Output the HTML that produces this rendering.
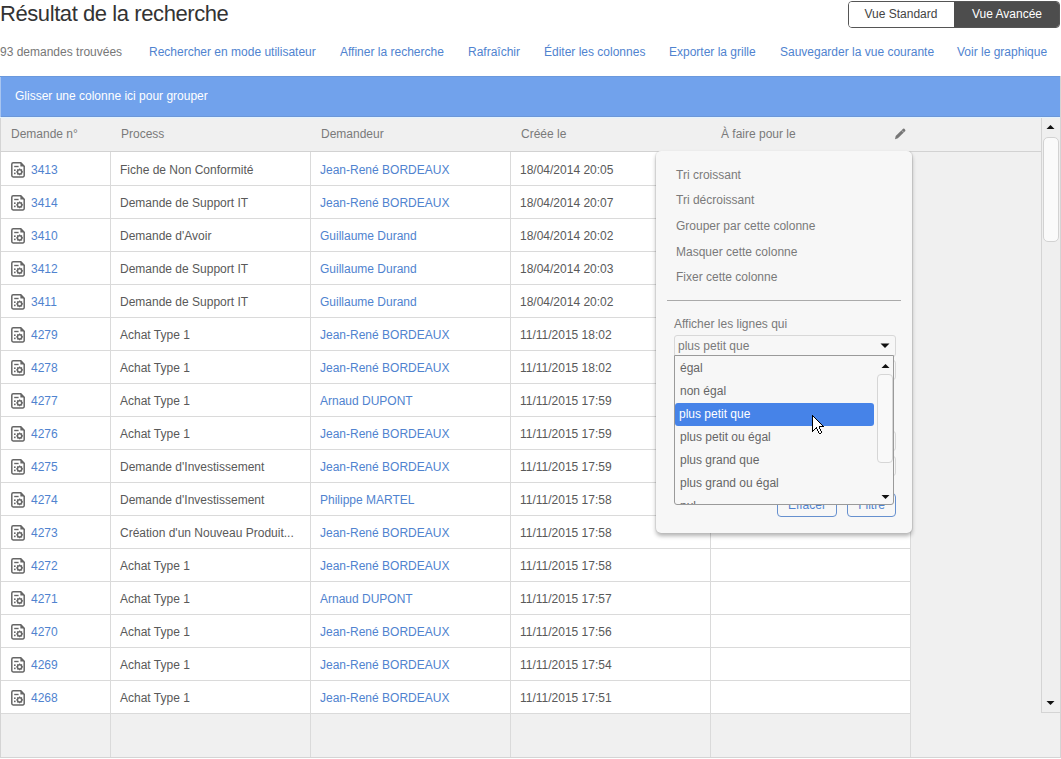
<!DOCTYPE html>
<html><head><meta charset="utf-8">
<style>
*{box-sizing:border-box;margin:0;padding:0}
html,body{width:1061px;height:759px;overflow:hidden;background:#fff;font-family:"Liberation Sans",sans-serif;font-size:12px;color:#555;position:relative}
.t{position:absolute;white-space:nowrap;line-height:14px;font-size:12px}
.tc{text-align:center}
.title{position:absolute;left:0;top:2px;font-size:22px;letter-spacing:-0.42px;line-height:24px;color:#333;white-space:nowrap}
.toggle{position:absolute;left:848px;top:1px;width:212px;height:27px;border:1px solid #555;border-radius:4px;overflow:hidden}
.toggle .t1{position:absolute;left:0;top:0;width:105px;height:100%;background:#fff}
.toggle .t2{position:absolute;left:105px;top:0;right:0;height:100%;background:#4d4d4d}
.lnk{color:#5083cf}
.cnt{color:#777}
.wt{color:#fff}
.ht{color:#7a7a7a}
.dt{color:#595959}
.box{position:absolute;left:0;top:76px;width:1061px;height:682px;background:#f0f0f0;border:1px solid #d4d4d4;border-top:none}
.band{position:absolute;left:0;top:76px;width:1060px;height:41px;background:#71a2ec;border-top:1px solid #6b99dd;border-bottom:1px solid #6b97d9}
.bandline{position:absolute;left:0;top:117px;width:1060px;height:1px;background:#e5f3fd}.hdrtint{position:absolute;left:1px;top:118px;width:1040px;height:1px;background:#ecf0f3}
.hdr{position:absolute;left:0;top:151px;width:1041px;height:1px;background:#d2d2d2}
.rows{position:absolute;left:1px;top:152px;width:909px;height:561px;background:#fff}
.hl{position:absolute;left:1px;width:909px;height:1px;background:#dadada}
.vl{position:absolute;top:152px;width:1px;height:605px;background:#dadada}
.ico{position:absolute}
.sb{position:absolute;left:1041px;top:118px;width:19px;height:595px;border-left:1px solid #d4d4d4;border-bottom:1px solid #d4d4d4;background:#efefef}
.sbthumb{position:absolute;left:1043px;top:137px;width:16px;height:105px;border:1px solid #d2d2d2;border-radius:5px;background:#fafafa}
.pop{position:absolute;left:656px;top:151px;width:256px;height:382px;background:#f7f7f7;border-radius:5px;box-shadow:0 3px 4px rgba(0,0,0,.3),-1px 0 0 rgba(0,0,0,.06),1px 0 0 rgba(0,0,0,.08)}
.mt{color:#7a7a7a}
.sep{position:absolute;left:667px;top:300px;width:234px;height:1px;background:#aaa}
.sel{position:absolute;left:674px;top:335px;width:222px;height:22px;border:1px solid #d8d8d8;border-radius:3px;background:#f7f7f7}
.inp{position:absolute;left:674px;width:222px;height:20px;border:1px solid #d8d8d8;border-radius:3px;background:#f7f7f7}
.btn{position:absolute;height:24px;border:1px solid #6690cf;border-radius:4px;background:#f7f7f7;color:#5083cf;text-align:center;line-height:23px}
.dd{position:absolute;left:674px;top:355px;width:220px;height:150px;border:1px solid #9a9a9a;border-radius:0 0 3px 3px;background:#f7f7f7;overflow:hidden}
.hi{position:absolute;left:675px;top:403px;width:199px;height:23px;border-radius:3px;background:#4683e8}
.ddthumb{position:absolute;left:877px;top:374px;width:16px;height:89px;border:1px solid #d6d6d6;border-radius:4px;background:#f9f9f9}
</style></head><body>
<div class="title">Résultat de la recherche</div>
<div class="toggle"><div class="t1"></div><div class="t2"></div></div>
<div class="t tc" style="left:848px;width:106px;top:7px;color:#444">Vue Standard</div>
<div class="t tc" style="left:954px;width:106px;top:7px;color:#fff">Vue Avancée</div>
<div class="t cnt" style="left:0px;top:45px;">93 demandes trouvées</div>
<div class="t lnk" style="left:149px;top:45px;">Rechercher en mode utilisateur</div>
<div class="t lnk" style="left:340px;top:45px;">Affiner la recherche</div>
<div class="t lnk" style="left:468px;top:45px;">Rafraîchir</div>
<div class="t lnk" style="left:544px;top:45px;">Éditer les colonnes</div>
<div class="t lnk" style="left:669px;top:45px;">Exporter la grille</div>
<div class="t lnk" style="left:780px;top:45px;">Sauvegarder la vue courante</div>
<div class="t lnk" style="left:957px;top:45px;">Voir le graphique</div>
<div class="box"></div>
<div class="band"></div>
<div class="bandline"></div>
<div style="position:absolute;left:0;top:77px;width:1px;height:40px;background:#a8c5f0"></div>
<div class="hdrtint"></div>
<div class="t wt" style="left:15px;top:89px;">Glisser une colonne ici pour grouper</div>
<div class="hdr"></div>
<div class="t ht" style="left:11px;top:127px;">Demande n°</div>
<div class="t ht" style="left:121px;top:127px;">Process</div>
<div class="t ht" style="left:321px;top:127px;">Demandeur</div>
<div class="t ht" style="left:521px;top:127px;">Créée le</div>
<div class="t ht" style="left:721px;top:127px;">À faire pour le</div>
<svg class="pencil" width="14" height="14" viewBox="0 0 14 14" style="position:absolute;left:893px;top:127px"><path d="M2 12.2 L4.9 11.3 L12.3 3.9 Q12.6 3.1 12 2.4 L11.4 1.8 Q10.8 1.3 10.1 1.7 L2.7 9.1 Z" fill="#777"/><path d="M8.7 3.4 L10.9 5.6" stroke="#e8e8e8" stroke-width="0.6"/></svg>
<div class="rows"></div>
<div class="hl" style="top:185px"></div>
<div class="hl" style="top:218px"></div>
<div class="hl" style="top:251px"></div>
<div class="hl" style="top:284px"></div>
<div class="hl" style="top:317px"></div>
<div class="hl" style="top:350px"></div>
<div class="hl" style="top:383px"></div>
<div class="hl" style="top:416px"></div>
<div class="hl" style="top:449px"></div>
<div class="hl" style="top:482px"></div>
<div class="hl" style="top:515px"></div>
<div class="hl" style="top:548px"></div>
<div class="hl" style="top:581px"></div>
<div class="hl" style="top:614px"></div>
<div class="hl" style="top:647px"></div>
<div class="hl" style="top:680px"></div>
<div class="hl" style="top:713px"></div>
<div class="vl" style="left:110px"></div>
<div class="vl" style="left:310px"></div>
<div class="vl" style="left:510px"></div>
<div class="vl" style="left:710px"></div>
<div class="vl" style="left:910px"></div>
<svg class="ico" width="16" height="17" viewBox="0 0 16 17" style="left:10px;top:161px"><path d="M3.2 1.8 H10.8 L14.2 5.2 V14.6 A1.4 1.4 0 0 1 12.8 16 H3.2 A1.4 1.4 0 0 1 1.8 14.6 V3.2 A1.4 1.4 0 0 1 3.2 1.8 Z" fill="none" stroke="#666" stroke-width="1.5"/>
<path d="M10.4 1.3 L14.7 5.6 L10.4 5.6 Z" fill="#666"/>
<path d="M4.2 5.5 H8.6" stroke="#666" stroke-width="1.4"/>
<rect x="4" y="8.4" width="1.6" height="1.6" fill="#666"/>
<rect x="4" y="11.6" width="1.6" height="1.6" fill="#666"/>
<circle cx="9.6" cy="10.9" r="2.1" fill="none" stroke="#666" stroke-width="1.4"/>
<path d="M9.6 7.5 V14.3 M6.2 10.9 H13 M7.2 8.5 L12 13.3 M12 8.5 L7.2 13.3" stroke="#666" stroke-width="1.2"/>
<circle cx="9.6" cy="10.9" r="1.4" fill="#fff"/>
</svg>
<div class="t lnk" style="left:31px;top:163px;">3413</div>
<div class="t dt" style="left:120px;top:163px;">Fiche de Non Conformité</div>
<div class="t lnk" style="left:320px;top:163px;">Jean-René BORDEAUX</div>
<div class="t dt" style="left:520px;top:163px;">18/04/2014 20:05</div>
<svg class="ico" width="16" height="17" viewBox="0 0 16 17" style="left:10px;top:194px"><path d="M3.2 1.8 H10.8 L14.2 5.2 V14.6 A1.4 1.4 0 0 1 12.8 16 H3.2 A1.4 1.4 0 0 1 1.8 14.6 V3.2 A1.4 1.4 0 0 1 3.2 1.8 Z" fill="none" stroke="#666" stroke-width="1.5"/>
<path d="M10.4 1.3 L14.7 5.6 L10.4 5.6 Z" fill="#666"/>
<path d="M4.2 5.5 H8.6" stroke="#666" stroke-width="1.4"/>
<rect x="4" y="8.4" width="1.6" height="1.6" fill="#666"/>
<rect x="4" y="11.6" width="1.6" height="1.6" fill="#666"/>
<circle cx="9.6" cy="10.9" r="2.1" fill="none" stroke="#666" stroke-width="1.4"/>
<path d="M9.6 7.5 V14.3 M6.2 10.9 H13 M7.2 8.5 L12 13.3 M12 8.5 L7.2 13.3" stroke="#666" stroke-width="1.2"/>
<circle cx="9.6" cy="10.9" r="1.4" fill="#fff"/>
</svg>
<div class="t lnk" style="left:31px;top:196px;">3414</div>
<div class="t dt" style="left:120px;top:196px;">Demande de Support IT</div>
<div class="t lnk" style="left:320px;top:196px;">Jean-René BORDEAUX</div>
<div class="t dt" style="left:520px;top:196px;">18/04/2014 20:07</div>
<svg class="ico" width="16" height="17" viewBox="0 0 16 17" style="left:10px;top:227px"><path d="M3.2 1.8 H10.8 L14.2 5.2 V14.6 A1.4 1.4 0 0 1 12.8 16 H3.2 A1.4 1.4 0 0 1 1.8 14.6 V3.2 A1.4 1.4 0 0 1 3.2 1.8 Z" fill="none" stroke="#666" stroke-width="1.5"/>
<path d="M10.4 1.3 L14.7 5.6 L10.4 5.6 Z" fill="#666"/>
<path d="M4.2 5.5 H8.6" stroke="#666" stroke-width="1.4"/>
<rect x="4" y="8.4" width="1.6" height="1.6" fill="#666"/>
<rect x="4" y="11.6" width="1.6" height="1.6" fill="#666"/>
<circle cx="9.6" cy="10.9" r="2.1" fill="none" stroke="#666" stroke-width="1.4"/>
<path d="M9.6 7.5 V14.3 M6.2 10.9 H13 M7.2 8.5 L12 13.3 M12 8.5 L7.2 13.3" stroke="#666" stroke-width="1.2"/>
<circle cx="9.6" cy="10.9" r="1.4" fill="#fff"/>
</svg>
<div class="t lnk" style="left:31px;top:229px;">3410</div>
<div class="t dt" style="left:120px;top:229px;">Demande d'Avoir</div>
<div class="t lnk" style="left:320px;top:229px;">Guillaume Durand</div>
<div class="t dt" style="left:520px;top:229px;">18/04/2014 20:02</div>
<svg class="ico" width="16" height="17" viewBox="0 0 16 17" style="left:10px;top:260px"><path d="M3.2 1.8 H10.8 L14.2 5.2 V14.6 A1.4 1.4 0 0 1 12.8 16 H3.2 A1.4 1.4 0 0 1 1.8 14.6 V3.2 A1.4 1.4 0 0 1 3.2 1.8 Z" fill="none" stroke="#666" stroke-width="1.5"/>
<path d="M10.4 1.3 L14.7 5.6 L10.4 5.6 Z" fill="#666"/>
<path d="M4.2 5.5 H8.6" stroke="#666" stroke-width="1.4"/>
<rect x="4" y="8.4" width="1.6" height="1.6" fill="#666"/>
<rect x="4" y="11.6" width="1.6" height="1.6" fill="#666"/>
<circle cx="9.6" cy="10.9" r="2.1" fill="none" stroke="#666" stroke-width="1.4"/>
<path d="M9.6 7.5 V14.3 M6.2 10.9 H13 M7.2 8.5 L12 13.3 M12 8.5 L7.2 13.3" stroke="#666" stroke-width="1.2"/>
<circle cx="9.6" cy="10.9" r="1.4" fill="#fff"/>
</svg>
<div class="t lnk" style="left:31px;top:262px;">3412</div>
<div class="t dt" style="left:120px;top:262px;">Demande de Support IT</div>
<div class="t lnk" style="left:320px;top:262px;">Guillaume Durand</div>
<div class="t dt" style="left:520px;top:262px;">18/04/2014 20:03</div>
<svg class="ico" width="16" height="17" viewBox="0 0 16 17" style="left:10px;top:293px"><path d="M3.2 1.8 H10.8 L14.2 5.2 V14.6 A1.4 1.4 0 0 1 12.8 16 H3.2 A1.4 1.4 0 0 1 1.8 14.6 V3.2 A1.4 1.4 0 0 1 3.2 1.8 Z" fill="none" stroke="#666" stroke-width="1.5"/>
<path d="M10.4 1.3 L14.7 5.6 L10.4 5.6 Z" fill="#666"/>
<path d="M4.2 5.5 H8.6" stroke="#666" stroke-width="1.4"/>
<rect x="4" y="8.4" width="1.6" height="1.6" fill="#666"/>
<rect x="4" y="11.6" width="1.6" height="1.6" fill="#666"/>
<circle cx="9.6" cy="10.9" r="2.1" fill="none" stroke="#666" stroke-width="1.4"/>
<path d="M9.6 7.5 V14.3 M6.2 10.9 H13 M7.2 8.5 L12 13.3 M12 8.5 L7.2 13.3" stroke="#666" stroke-width="1.2"/>
<circle cx="9.6" cy="10.9" r="1.4" fill="#fff"/>
</svg>
<div class="t lnk" style="left:31px;top:295px;">3411</div>
<div class="t dt" style="left:120px;top:295px;">Demande de Support IT</div>
<div class="t lnk" style="left:320px;top:295px;">Guillaume Durand</div>
<div class="t dt" style="left:520px;top:295px;">18/04/2014 20:02</div>
<svg class="ico" width="16" height="17" viewBox="0 0 16 17" style="left:10px;top:326px"><path d="M3.2 1.8 H10.8 L14.2 5.2 V14.6 A1.4 1.4 0 0 1 12.8 16 H3.2 A1.4 1.4 0 0 1 1.8 14.6 V3.2 A1.4 1.4 0 0 1 3.2 1.8 Z" fill="none" stroke="#666" stroke-width="1.5"/>
<path d="M10.4 1.3 L14.7 5.6 L10.4 5.6 Z" fill="#666"/>
<path d="M4.2 5.5 H8.6" stroke="#666" stroke-width="1.4"/>
<rect x="4" y="8.4" width="1.6" height="1.6" fill="#666"/>
<rect x="4" y="11.6" width="1.6" height="1.6" fill="#666"/>
<circle cx="9.6" cy="10.9" r="2.1" fill="none" stroke="#666" stroke-width="1.4"/>
<path d="M9.6 7.5 V14.3 M6.2 10.9 H13 M7.2 8.5 L12 13.3 M12 8.5 L7.2 13.3" stroke="#666" stroke-width="1.2"/>
<circle cx="9.6" cy="10.9" r="1.4" fill="#fff"/>
</svg>
<div class="t lnk" style="left:31px;top:328px;">4279</div>
<div class="t dt" style="left:120px;top:328px;">Achat Type 1</div>
<div class="t lnk" style="left:320px;top:328px;">Jean-René BORDEAUX</div>
<div class="t dt" style="left:520px;top:328px;">11/11/2015 18:02</div>
<svg class="ico" width="16" height="17" viewBox="0 0 16 17" style="left:10px;top:359px"><path d="M3.2 1.8 H10.8 L14.2 5.2 V14.6 A1.4 1.4 0 0 1 12.8 16 H3.2 A1.4 1.4 0 0 1 1.8 14.6 V3.2 A1.4 1.4 0 0 1 3.2 1.8 Z" fill="none" stroke="#666" stroke-width="1.5"/>
<path d="M10.4 1.3 L14.7 5.6 L10.4 5.6 Z" fill="#666"/>
<path d="M4.2 5.5 H8.6" stroke="#666" stroke-width="1.4"/>
<rect x="4" y="8.4" width="1.6" height="1.6" fill="#666"/>
<rect x="4" y="11.6" width="1.6" height="1.6" fill="#666"/>
<circle cx="9.6" cy="10.9" r="2.1" fill="none" stroke="#666" stroke-width="1.4"/>
<path d="M9.6 7.5 V14.3 M6.2 10.9 H13 M7.2 8.5 L12 13.3 M12 8.5 L7.2 13.3" stroke="#666" stroke-width="1.2"/>
<circle cx="9.6" cy="10.9" r="1.4" fill="#fff"/>
</svg>
<div class="t lnk" style="left:31px;top:361px;">4278</div>
<div class="t dt" style="left:120px;top:361px;">Achat Type 1</div>
<div class="t lnk" style="left:320px;top:361px;">Jean-René BORDEAUX</div>
<div class="t dt" style="left:520px;top:361px;">11/11/2015 18:02</div>
<svg class="ico" width="16" height="17" viewBox="0 0 16 17" style="left:10px;top:392px"><path d="M3.2 1.8 H10.8 L14.2 5.2 V14.6 A1.4 1.4 0 0 1 12.8 16 H3.2 A1.4 1.4 0 0 1 1.8 14.6 V3.2 A1.4 1.4 0 0 1 3.2 1.8 Z" fill="none" stroke="#666" stroke-width="1.5"/>
<path d="M10.4 1.3 L14.7 5.6 L10.4 5.6 Z" fill="#666"/>
<path d="M4.2 5.5 H8.6" stroke="#666" stroke-width="1.4"/>
<rect x="4" y="8.4" width="1.6" height="1.6" fill="#666"/>
<rect x="4" y="11.6" width="1.6" height="1.6" fill="#666"/>
<circle cx="9.6" cy="10.9" r="2.1" fill="none" stroke="#666" stroke-width="1.4"/>
<path d="M9.6 7.5 V14.3 M6.2 10.9 H13 M7.2 8.5 L12 13.3 M12 8.5 L7.2 13.3" stroke="#666" stroke-width="1.2"/>
<circle cx="9.6" cy="10.9" r="1.4" fill="#fff"/>
</svg>
<div class="t lnk" style="left:31px;top:394px;">4277</div>
<div class="t dt" style="left:120px;top:394px;">Achat Type 1</div>
<div class="t lnk" style="left:320px;top:394px;">Arnaud DUPONT</div>
<div class="t dt" style="left:520px;top:394px;">11/11/2015 17:59</div>
<svg class="ico" width="16" height="17" viewBox="0 0 16 17" style="left:10px;top:425px"><path d="M3.2 1.8 H10.8 L14.2 5.2 V14.6 A1.4 1.4 0 0 1 12.8 16 H3.2 A1.4 1.4 0 0 1 1.8 14.6 V3.2 A1.4 1.4 0 0 1 3.2 1.8 Z" fill="none" stroke="#666" stroke-width="1.5"/>
<path d="M10.4 1.3 L14.7 5.6 L10.4 5.6 Z" fill="#666"/>
<path d="M4.2 5.5 H8.6" stroke="#666" stroke-width="1.4"/>
<rect x="4" y="8.4" width="1.6" height="1.6" fill="#666"/>
<rect x="4" y="11.6" width="1.6" height="1.6" fill="#666"/>
<circle cx="9.6" cy="10.9" r="2.1" fill="none" stroke="#666" stroke-width="1.4"/>
<path d="M9.6 7.5 V14.3 M6.2 10.9 H13 M7.2 8.5 L12 13.3 M12 8.5 L7.2 13.3" stroke="#666" stroke-width="1.2"/>
<circle cx="9.6" cy="10.9" r="1.4" fill="#fff"/>
</svg>
<div class="t lnk" style="left:31px;top:427px;">4276</div>
<div class="t dt" style="left:120px;top:427px;">Achat Type 1</div>
<div class="t lnk" style="left:320px;top:427px;">Jean-René BORDEAUX</div>
<div class="t dt" style="left:520px;top:427px;">11/11/2015 17:59</div>
<svg class="ico" width="16" height="17" viewBox="0 0 16 17" style="left:10px;top:458px"><path d="M3.2 1.8 H10.8 L14.2 5.2 V14.6 A1.4 1.4 0 0 1 12.8 16 H3.2 A1.4 1.4 0 0 1 1.8 14.6 V3.2 A1.4 1.4 0 0 1 3.2 1.8 Z" fill="none" stroke="#666" stroke-width="1.5"/>
<path d="M10.4 1.3 L14.7 5.6 L10.4 5.6 Z" fill="#666"/>
<path d="M4.2 5.5 H8.6" stroke="#666" stroke-width="1.4"/>
<rect x="4" y="8.4" width="1.6" height="1.6" fill="#666"/>
<rect x="4" y="11.6" width="1.6" height="1.6" fill="#666"/>
<circle cx="9.6" cy="10.9" r="2.1" fill="none" stroke="#666" stroke-width="1.4"/>
<path d="M9.6 7.5 V14.3 M6.2 10.9 H13 M7.2 8.5 L12 13.3 M12 8.5 L7.2 13.3" stroke="#666" stroke-width="1.2"/>
<circle cx="9.6" cy="10.9" r="1.4" fill="#fff"/>
</svg>
<div class="t lnk" style="left:31px;top:460px;">4275</div>
<div class="t dt" style="left:120px;top:460px;">Demande d'Investissement</div>
<div class="t lnk" style="left:320px;top:460px;">Jean-René BORDEAUX</div>
<div class="t dt" style="left:520px;top:460px;">11/11/2015 17:59</div>
<svg class="ico" width="16" height="17" viewBox="0 0 16 17" style="left:10px;top:491px"><path d="M3.2 1.8 H10.8 L14.2 5.2 V14.6 A1.4 1.4 0 0 1 12.8 16 H3.2 A1.4 1.4 0 0 1 1.8 14.6 V3.2 A1.4 1.4 0 0 1 3.2 1.8 Z" fill="none" stroke="#666" stroke-width="1.5"/>
<path d="M10.4 1.3 L14.7 5.6 L10.4 5.6 Z" fill="#666"/>
<path d="M4.2 5.5 H8.6" stroke="#666" stroke-width="1.4"/>
<rect x="4" y="8.4" width="1.6" height="1.6" fill="#666"/>
<rect x="4" y="11.6" width="1.6" height="1.6" fill="#666"/>
<circle cx="9.6" cy="10.9" r="2.1" fill="none" stroke="#666" stroke-width="1.4"/>
<path d="M9.6 7.5 V14.3 M6.2 10.9 H13 M7.2 8.5 L12 13.3 M12 8.5 L7.2 13.3" stroke="#666" stroke-width="1.2"/>
<circle cx="9.6" cy="10.9" r="1.4" fill="#fff"/>
</svg>
<div class="t lnk" style="left:31px;top:493px;">4274</div>
<div class="t dt" style="left:120px;top:493px;">Demande d'Investissement</div>
<div class="t lnk" style="left:320px;top:493px;">Philippe MARTEL</div>
<div class="t dt" style="left:520px;top:493px;">11/11/2015 17:58</div>
<svg class="ico" width="16" height="17" viewBox="0 0 16 17" style="left:10px;top:524px"><path d="M3.2 1.8 H10.8 L14.2 5.2 V14.6 A1.4 1.4 0 0 1 12.8 16 H3.2 A1.4 1.4 0 0 1 1.8 14.6 V3.2 A1.4 1.4 0 0 1 3.2 1.8 Z" fill="none" stroke="#666" stroke-width="1.5"/>
<path d="M10.4 1.3 L14.7 5.6 L10.4 5.6 Z" fill="#666"/>
<path d="M4.2 5.5 H8.6" stroke="#666" stroke-width="1.4"/>
<rect x="4" y="8.4" width="1.6" height="1.6" fill="#666"/>
<rect x="4" y="11.6" width="1.6" height="1.6" fill="#666"/>
<circle cx="9.6" cy="10.9" r="2.1" fill="none" stroke="#666" stroke-width="1.4"/>
<path d="M9.6 7.5 V14.3 M6.2 10.9 H13 M7.2 8.5 L12 13.3 M12 8.5 L7.2 13.3" stroke="#666" stroke-width="1.2"/>
<circle cx="9.6" cy="10.9" r="1.4" fill="#fff"/>
</svg>
<div class="t lnk" style="left:31px;top:526px;">4273</div>
<div class="t dt" style="left:120px;top:526px;">Création d'un Nouveau Produit...</div>
<div class="t lnk" style="left:320px;top:526px;">Jean-René BORDEAUX</div>
<div class="t dt" style="left:520px;top:526px;">11/11/2015 17:58</div>
<svg class="ico" width="16" height="17" viewBox="0 0 16 17" style="left:10px;top:557px"><path d="M3.2 1.8 H10.8 L14.2 5.2 V14.6 A1.4 1.4 0 0 1 12.8 16 H3.2 A1.4 1.4 0 0 1 1.8 14.6 V3.2 A1.4 1.4 0 0 1 3.2 1.8 Z" fill="none" stroke="#666" stroke-width="1.5"/>
<path d="M10.4 1.3 L14.7 5.6 L10.4 5.6 Z" fill="#666"/>
<path d="M4.2 5.5 H8.6" stroke="#666" stroke-width="1.4"/>
<rect x="4" y="8.4" width="1.6" height="1.6" fill="#666"/>
<rect x="4" y="11.6" width="1.6" height="1.6" fill="#666"/>
<circle cx="9.6" cy="10.9" r="2.1" fill="none" stroke="#666" stroke-width="1.4"/>
<path d="M9.6 7.5 V14.3 M6.2 10.9 H13 M7.2 8.5 L12 13.3 M12 8.5 L7.2 13.3" stroke="#666" stroke-width="1.2"/>
<circle cx="9.6" cy="10.9" r="1.4" fill="#fff"/>
</svg>
<div class="t lnk" style="left:31px;top:559px;">4272</div>
<div class="t dt" style="left:120px;top:559px;">Achat Type 1</div>
<div class="t lnk" style="left:320px;top:559px;">Jean-René BORDEAUX</div>
<div class="t dt" style="left:520px;top:559px;">11/11/2015 17:58</div>
<svg class="ico" width="16" height="17" viewBox="0 0 16 17" style="left:10px;top:590px"><path d="M3.2 1.8 H10.8 L14.2 5.2 V14.6 A1.4 1.4 0 0 1 12.8 16 H3.2 A1.4 1.4 0 0 1 1.8 14.6 V3.2 A1.4 1.4 0 0 1 3.2 1.8 Z" fill="none" stroke="#666" stroke-width="1.5"/>
<path d="M10.4 1.3 L14.7 5.6 L10.4 5.6 Z" fill="#666"/>
<path d="M4.2 5.5 H8.6" stroke="#666" stroke-width="1.4"/>
<rect x="4" y="8.4" width="1.6" height="1.6" fill="#666"/>
<rect x="4" y="11.6" width="1.6" height="1.6" fill="#666"/>
<circle cx="9.6" cy="10.9" r="2.1" fill="none" stroke="#666" stroke-width="1.4"/>
<path d="M9.6 7.5 V14.3 M6.2 10.9 H13 M7.2 8.5 L12 13.3 M12 8.5 L7.2 13.3" stroke="#666" stroke-width="1.2"/>
<circle cx="9.6" cy="10.9" r="1.4" fill="#fff"/>
</svg>
<div class="t lnk" style="left:31px;top:592px;">4271</div>
<div class="t dt" style="left:120px;top:592px;">Achat Type 1</div>
<div class="t lnk" style="left:320px;top:592px;">Arnaud DUPONT</div>
<div class="t dt" style="left:520px;top:592px;">11/11/2015 17:57</div>
<svg class="ico" width="16" height="17" viewBox="0 0 16 17" style="left:10px;top:623px"><path d="M3.2 1.8 H10.8 L14.2 5.2 V14.6 A1.4 1.4 0 0 1 12.8 16 H3.2 A1.4 1.4 0 0 1 1.8 14.6 V3.2 A1.4 1.4 0 0 1 3.2 1.8 Z" fill="none" stroke="#666" stroke-width="1.5"/>
<path d="M10.4 1.3 L14.7 5.6 L10.4 5.6 Z" fill="#666"/>
<path d="M4.2 5.5 H8.6" stroke="#666" stroke-width="1.4"/>
<rect x="4" y="8.4" width="1.6" height="1.6" fill="#666"/>
<rect x="4" y="11.6" width="1.6" height="1.6" fill="#666"/>
<circle cx="9.6" cy="10.9" r="2.1" fill="none" stroke="#666" stroke-width="1.4"/>
<path d="M9.6 7.5 V14.3 M6.2 10.9 H13 M7.2 8.5 L12 13.3 M12 8.5 L7.2 13.3" stroke="#666" stroke-width="1.2"/>
<circle cx="9.6" cy="10.9" r="1.4" fill="#fff"/>
</svg>
<div class="t lnk" style="left:31px;top:625px;">4270</div>
<div class="t dt" style="left:120px;top:625px;">Achat Type 1</div>
<div class="t lnk" style="left:320px;top:625px;">Jean-René BORDEAUX</div>
<div class="t dt" style="left:520px;top:625px;">11/11/2015 17:56</div>
<svg class="ico" width="16" height="17" viewBox="0 0 16 17" style="left:10px;top:656px"><path d="M3.2 1.8 H10.8 L14.2 5.2 V14.6 A1.4 1.4 0 0 1 12.8 16 H3.2 A1.4 1.4 0 0 1 1.8 14.6 V3.2 A1.4 1.4 0 0 1 3.2 1.8 Z" fill="none" stroke="#666" stroke-width="1.5"/>
<path d="M10.4 1.3 L14.7 5.6 L10.4 5.6 Z" fill="#666"/>
<path d="M4.2 5.5 H8.6" stroke="#666" stroke-width="1.4"/>
<rect x="4" y="8.4" width="1.6" height="1.6" fill="#666"/>
<rect x="4" y="11.6" width="1.6" height="1.6" fill="#666"/>
<circle cx="9.6" cy="10.9" r="2.1" fill="none" stroke="#666" stroke-width="1.4"/>
<path d="M9.6 7.5 V14.3 M6.2 10.9 H13 M7.2 8.5 L12 13.3 M12 8.5 L7.2 13.3" stroke="#666" stroke-width="1.2"/>
<circle cx="9.6" cy="10.9" r="1.4" fill="#fff"/>
</svg>
<div class="t lnk" style="left:31px;top:658px;">4269</div>
<div class="t dt" style="left:120px;top:658px;">Achat Type 1</div>
<div class="t lnk" style="left:320px;top:658px;">Jean-René BORDEAUX</div>
<div class="t dt" style="left:520px;top:658px;">11/11/2015 17:54</div>
<svg class="ico" width="16" height="17" viewBox="0 0 16 17" style="left:10px;top:689px"><path d="M3.2 1.8 H10.8 L14.2 5.2 V14.6 A1.4 1.4 0 0 1 12.8 16 H3.2 A1.4 1.4 0 0 1 1.8 14.6 V3.2 A1.4 1.4 0 0 1 3.2 1.8 Z" fill="none" stroke="#666" stroke-width="1.5"/>
<path d="M10.4 1.3 L14.7 5.6 L10.4 5.6 Z" fill="#666"/>
<path d="M4.2 5.5 H8.6" stroke="#666" stroke-width="1.4"/>
<rect x="4" y="8.4" width="1.6" height="1.6" fill="#666"/>
<rect x="4" y="11.6" width="1.6" height="1.6" fill="#666"/>
<circle cx="9.6" cy="10.9" r="2.1" fill="none" stroke="#666" stroke-width="1.4"/>
<path d="M9.6 7.5 V14.3 M6.2 10.9 H13 M7.2 8.5 L12 13.3 M12 8.5 L7.2 13.3" stroke="#666" stroke-width="1.2"/>
<circle cx="9.6" cy="10.9" r="1.4" fill="#fff"/>
</svg>
<div class="t lnk" style="left:31px;top:691px;">4268</div>
<div class="t dt" style="left:120px;top:691px;">Achat Type 1</div>
<div class="t lnk" style="left:320px;top:691px;">Jean-René BORDEAUX</div>
<div class="t dt" style="left:520px;top:691px;">11/11/2015 17:51</div>
<div class="sb"></div>
<div class="sbthumb"></div>
<svg width="9" height="6" style="position:absolute;left:1046px;top:124px"><path d="M0.5 5 L4.5 1 L8.5 5 Z" fill="#111"/></svg>
<svg width="9" height="6" style="position:absolute;left:1046px;top:700px"><path d="M0.5 1 L4.5 5 L8.5 1 Z" fill="#111"/></svg>
<div class="pop"></div>
<div class="t mt" style="left:676px;top:168px">Tri croissant</div>
<div class="t mt" style="left:676px;top:193px">Tri décroissant</div>
<div class="t mt" style="left:676px;top:219px">Grouper par cette colonne</div>
<div class="t mt" style="left:676px;top:245px">Masquer cette colonne</div>
<div class="t mt" style="left:676px;top:270px">Fixer cette colonne</div>
<div class="sep"></div>
<div class="t mt" style="left:674px;top:317px">Afficher les lignes qui</div>
<div class="sel"></div>
<div class="t mt" style="left:678px;top:339px">plus petit que</div>
<svg width="10" height="6" style="position:absolute;left:880px;top:343px"><path d="M0.5 0.5 L5 5 L9.5 0.5 Z" fill="#111"/></svg>
<div class="inp" style="top:360px"></div>
<div class="inp" style="top:431px"></div>
<div class="inp" style="top:456px"></div>
<div class="btn" style="left:777px;top:493px;width:60px">Effacer</div>
<div class="btn" style="left:847px;top:493px;width:49px">Filtre</div>
<div class="dd"></div>
<div class="t mt" style="left:680px;top:361px;color:#666">égal</div>
<div class="t mt" style="left:680px;top:384px;color:#666">non égal</div>
<div class="hi"></div>
<div class="t" style="left:679px;top:407px;color:#fff">plus petit que</div>
<div class="t mt" style="left:680px;top:430px;color:#666">plus petit ou égal</div>
<div class="t mt" style="left:680px;top:453px;color:#666">plus grand que</div>
<div class="t mt" style="left:680px;top:476px;color:#666">plus grand ou égal</div>
<div style="position:absolute;left:675px;top:498px;width:200px;height:6px;overflow:hidden"><div class="t mt" style="left:5px;top:1px;color:#666">nul</div></div>
<div class="ddthumb"></div>
<svg width="9" height="6" style="position:absolute;left:881px;top:363px"><path d="M0.5 5 L4.5 1 L8.5 5 Z" fill="#111"/></svg>
<svg width="9" height="6" style="position:absolute;left:881px;top:494px"><path d="M0.5 1 L4.5 5 L8.5 1 Z" fill="#111"/></svg>
<svg width="13" height="21" shape-rendering="crispEdges" style="position:absolute;left:812px;top:415px"><rect x="0" y="0" width="1" height="1" fill="#000"/><rect x="0" y="1" width="1" height="1" fill="#000"/><rect x="1" y="1" width="1" height="1" fill="#000"/><rect x="0" y="2" width="1" height="1" fill="#000"/><rect x="1" y="2" width="1" height="1" fill="#fff"/><rect x="2" y="2" width="1" height="1" fill="#000"/><rect x="0" y="3" width="1" height="1" fill="#000"/><rect x="1" y="3" width="1" height="1" fill="#fff"/><rect x="2" y="3" width="1" height="1" fill="#fff"/><rect x="3" y="3" width="1" height="1" fill="#000"/><rect x="0" y="4" width="1" height="1" fill="#000"/><rect x="1" y="4" width="1" height="1" fill="#fff"/><rect x="2" y="4" width="1" height="1" fill="#fff"/><rect x="3" y="4" width="1" height="1" fill="#fff"/><rect x="4" y="4" width="1" height="1" fill="#000"/><rect x="0" y="5" width="1" height="1" fill="#000"/><rect x="1" y="5" width="1" height="1" fill="#fff"/><rect x="2" y="5" width="1" height="1" fill="#fff"/><rect x="3" y="5" width="1" height="1" fill="#fff"/><rect x="4" y="5" width="1" height="1" fill="#fff"/><rect x="5" y="5" width="1" height="1" fill="#000"/><rect x="0" y="6" width="1" height="1" fill="#000"/><rect x="1" y="6" width="1" height="1" fill="#fff"/><rect x="2" y="6" width="1" height="1" fill="#fff"/><rect x="3" y="6" width="1" height="1" fill="#fff"/><rect x="4" y="6" width="1" height="1" fill="#fff"/><rect x="5" y="6" width="1" height="1" fill="#fff"/><rect x="6" y="6" width="1" height="1" fill="#000"/><rect x="0" y="7" width="1" height="1" fill="#000"/><rect x="1" y="7" width="1" height="1" fill="#fff"/><rect x="2" y="7" width="1" height="1" fill="#fff"/><rect x="3" y="7" width="1" height="1" fill="#fff"/><rect x="4" y="7" width="1" height="1" fill="#fff"/><rect x="5" y="7" width="1" height="1" fill="#fff"/><rect x="6" y="7" width="1" height="1" fill="#fff"/><rect x="7" y="7" width="1" height="1" fill="#000"/><rect x="0" y="8" width="1" height="1" fill="#000"/><rect x="1" y="8" width="1" height="1" fill="#fff"/><rect x="2" y="8" width="1" height="1" fill="#fff"/><rect x="3" y="8" width="1" height="1" fill="#fff"/><rect x="4" y="8" width="1" height="1" fill="#fff"/><rect x="5" y="8" width="1" height="1" fill="#fff"/><rect x="6" y="8" width="1" height="1" fill="#fff"/><rect x="7" y="8" width="1" height="1" fill="#fff"/><rect x="8" y="8" width="1" height="1" fill="#000"/><rect x="0" y="9" width="1" height="1" fill="#000"/><rect x="1" y="9" width="1" height="1" fill="#fff"/><rect x="2" y="9" width="1" height="1" fill="#fff"/><rect x="3" y="9" width="1" height="1" fill="#fff"/><rect x="4" y="9" width="1" height="1" fill="#fff"/><rect x="5" y="9" width="1" height="1" fill="#fff"/><rect x="6" y="9" width="1" height="1" fill="#fff"/><rect x="7" y="9" width="1" height="1" fill="#fff"/><rect x="8" y="9" width="1" height="1" fill="#fff"/><rect x="9" y="9" width="1" height="1" fill="#000"/><rect x="0" y="10" width="1" height="1" fill="#000"/><rect x="1" y="10" width="1" height="1" fill="#fff"/><rect x="2" y="10" width="1" height="1" fill="#fff"/><rect x="3" y="10" width="1" height="1" fill="#fff"/><rect x="4" y="10" width="1" height="1" fill="#fff"/><rect x="5" y="10" width="1" height="1" fill="#fff"/><rect x="6" y="10" width="1" height="1" fill="#fff"/><rect x="7" y="10" width="1" height="1" fill="#fff"/><rect x="8" y="10" width="1" height="1" fill="#fff"/><rect x="9" y="10" width="1" height="1" fill="#fff"/><rect x="10" y="10" width="1" height="1" fill="#000"/><rect x="0" y="11" width="1" height="1" fill="#000"/><rect x="1" y="11" width="1" height="1" fill="#fff"/><rect x="2" y="11" width="1" height="1" fill="#fff"/><rect x="3" y="11" width="1" height="1" fill="#fff"/><rect x="4" y="11" width="1" height="1" fill="#fff"/><rect x="5" y="11" width="1" height="1" fill="#fff"/><rect x="6" y="11" width="1" height="1" fill="#fff"/><rect x="7" y="11" width="1" height="1" fill="#000"/><rect x="8" y="11" width="1" height="1" fill="#000"/><rect x="9" y="11" width="1" height="1" fill="#000"/><rect x="10" y="11" width="1" height="1" fill="#000"/><rect x="11" y="11" width="1" height="1" fill="#000"/><rect x="0" y="12" width="1" height="1" fill="#000"/><rect x="1" y="12" width="1" height="1" fill="#fff"/><rect x="2" y="12" width="1" height="1" fill="#fff"/><rect x="3" y="12" width="1" height="1" fill="#fff"/><rect x="4" y="12" width="1" height="1" fill="#000"/><rect x="5" y="12" width="1" height="1" fill="#fff"/><rect x="6" y="12" width="1" height="1" fill="#fff"/><rect x="7" y="12" width="1" height="1" fill="#000"/><rect x="0" y="13" width="1" height="1" fill="#000"/><rect x="1" y="13" width="1" height="1" fill="#fff"/><rect x="2" y="13" width="1" height="1" fill="#fff"/><rect x="3" y="13" width="1" height="1" fill="#000"/><rect x="4" y="13" width="1" height="1" fill="#000"/><rect x="5" y="13" width="1" height="1" fill="#fff"/><rect x="6" y="13" width="1" height="1" fill="#fff"/><rect x="7" y="13" width="1" height="1" fill="#000"/><rect x="0" y="14" width="1" height="1" fill="#000"/><rect x="1" y="14" width="1" height="1" fill="#fff"/><rect x="2" y="14" width="1" height="1" fill="#000"/><rect x="5" y="14" width="1" height="1" fill="#000"/><rect x="6" y="14" width="1" height="1" fill="#fff"/><rect x="7" y="14" width="1" height="1" fill="#fff"/><rect x="8" y="14" width="1" height="1" fill="#000"/><rect x="0" y="15" width="1" height="1" fill="#000"/><rect x="1" y="15" width="1" height="1" fill="#000"/><rect x="5" y="15" width="1" height="1" fill="#000"/><rect x="6" y="15" width="1" height="1" fill="#fff"/><rect x="7" y="15" width="1" height="1" fill="#fff"/><rect x="8" y="15" width="1" height="1" fill="#000"/><rect x="0" y="16" width="1" height="1" fill="#000"/><rect x="6" y="16" width="1" height="1" fill="#000"/><rect x="7" y="16" width="1" height="1" fill="#fff"/><rect x="8" y="16" width="1" height="1" fill="#fff"/><rect x="9" y="16" width="1" height="1" fill="#000"/><rect x="6" y="17" width="1" height="1" fill="#000"/><rect x="7" y="17" width="1" height="1" fill="#fff"/><rect x="8" y="17" width="1" height="1" fill="#fff"/><rect x="9" y="17" width="1" height="1" fill="#000"/><rect x="7" y="18" width="1" height="1" fill="#000"/><rect x="8" y="18" width="1" height="1" fill="#000"/></svg>

</body></html>
